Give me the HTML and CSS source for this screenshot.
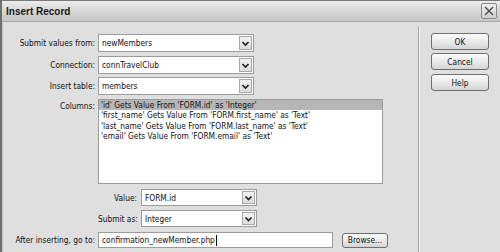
FILE: index.html
```html
<!DOCTYPE html>
<html>
<head>
<meta charset="utf-8">
<link rel="stylesheet" href="styles.css">
</head>
<body>
<div class="window">
  <div class="titlebar">
    <span class="title">Insert Record</span>
    <span class="close"><svg width="14" height="14" viewBox="0 0 14 14"><path d="M3 3 L11 11 M11 3 L3 11" stroke="#4a4a4a" stroke-width="1.4" fill="none"/></svg></span>
  </div>
  <div class="body">
    <div class="form">
      <div class="row r1">
        <label>Submit values from:</label>
        <div class="select wide"><span class="val">newMembers</span><span class="arrow"><svg width="11" height="13" viewBox="0 0 11 13"><path d="M2.5 5 L5.5 8 L8.5 5" stroke="#222" stroke-width="1.7" fill="none"/></svg></span></div>
      </div>
      <div class="row r2">
        <label>Connection:</label>
        <div class="select wide"><span class="val">connTravelClub</span><span class="arrow"><svg width="11" height="13" viewBox="0 0 11 13"><path d="M2.5 5 L5.5 8 L8.5 5" stroke="#222" stroke-width="1.7" fill="none"/></svg></span></div>
      </div>
      <div class="row r3">
        <label>Insert table:</label>
        <div class="select wide"><span class="val">members</span><span class="arrow"><svg width="11" height="13" viewBox="0 0 11 13"><path d="M2.5 5 L5.5 8 L8.5 5" stroke="#222" stroke-width="1.7" fill="none"/></svg></span></div>
      </div>
      <div class="row r4">
        <label class="top">Columns:</label>
        <div class="listbox">
          <div class="item sel">'id' Gets Value From 'FORM.id' as 'Integer'</div>
          <div class="item">'first_name' Gets Value From 'FORM.first_name' as 'Text'</div>
          <div class="item">'last_name' Gets Value From 'FORM.last_name' as 'Text'</div>
          <div class="item">'email' Gets Value From 'FORM.email' as 'Text'</div>
        </div>
      </div>
      <div class="row sub r5">
        <label>Value:</label>
        <div class="select small"><span class="val">FORM.id</span><span class="arrow"><svg width="11" height="12" viewBox="0 0 11 12"><path d="M2.5 4.5 L5.5 7.5 L8.5 4.5" stroke="#222" stroke-width="1.7" fill="none"/></svg></span></div>
      </div>
      <div class="row sub r6">
        <label>Submit as:</label>
        <div class="select small"><span class="val">Integer</span><span class="arrow"><svg width="11" height="12" viewBox="0 0 11 12"><path d="M2.5 4.5 L5.5 7.5 L8.5 4.5" stroke="#222" stroke-width="1.7" fill="none"/></svg></span></div>
      </div>
      <div class="row r7">
        <label>After inserting, go to:</label>
        <div class="input"><span class="val">confirmation_newMember.php</span><span class="caret"></span></div>
        <span class="btn browse">Browse...</span>
      </div>
    </div>
    <div class="sep"></div>
    <div class="buttons">
      <span class="btn">OK</span>
      <span class="btn">Cancel</span>
      <span class="btn help">Help</span>
    </div>
  </div>
</div>
</body>
</html>
```
FILE: styles.css
```css
html, body {
  margin: 0;
  padding: 0;
}
body {
  width: 500px;
  height: 252px;
  overflow: hidden;
  background: #dedede;
  font-family: "DejaVu Sans Condensed", "DejaVu Sans", "Liberation Sans", sans-serif;
  font-size: 8.3px;
  color: #111;
}
.window {
  height: 252px;
  border-left: 2px solid #6f6f6f;
  box-sizing: border-box;
  background: #dfdfdf;
}
.titlebar {
  height: 22px;
  box-sizing: border-box;
  border-top: 1px solid #7a7a7a;
  border-bottom: 1px solid #a9a9a9;
  background: linear-gradient(#ededed, #d6d6d6 50%, #c6c6c6);
  display: flex;
  align-items: center;
  justify-content: space-between;
  padding: 0 3px 0 4px;
}
.title {
  font-family: "Liberation Sans", Arial, sans-serif;
  font-weight: bold;
  font-size: 10px;
  color: #1a1a1a;
}
.close {
  width: 16px;
  height: 16px;
  box-sizing: border-box;
  border: 1px solid #8a8a8a;
  border-radius: 2px;
  background: linear-gradient(#f0f0f0, #cfcfcf);
  display: flex;
  align-items: center;
  justify-content: center;
}
.body {
  display: flex;
  height: 230px;
  box-shadow: inset 1px 0 #c2c2c2;
}
.form {
  width: 416px;
  box-sizing: border-box;
  padding: 12px 0 0 6px;
  display: flex;
  flex-direction: column;
}
.row {
  display: flex;
  align-items: center;
  gap: 3px;
}
.row > label {
  width: 87px;
  text-align: right;
  white-space: nowrap;
}
.row > label.top {
  align-self: flex-start;
  padding-top: 2px;
}
.r2 { margin-top: 4px; }
.r3 { margin-top: 3px; }
.r4 { margin-top: 4px; align-items: flex-start; }
.r5 { margin-top: 5px; }
.r6 { margin-top: 4px; }
.r7 { margin-top: 5px; }
.row.sub {
  padding-left: 90px;
  gap: 4px;
}
.row.sub > label {
  width: 39px;
}
.select {
  height: 18px;
  box-sizing: border-box;
  border: 1px solid #9c9c9c;
  background: #fff;
  display: flex;
  align-items: center;
  justify-content: space-between;
  padding: 1px 1px 1px 3px;
}
.select.wide { width: 156px; }
.select.small { width: 116px; height: 17px; }
.arrow {
  width: 13px;
  height: 100%;
  box-sizing: border-box;
  border: 1px solid #a8a8a8;
  background: linear-gradient(#f2f2f2, #dcdcdc);
  display: flex;
  align-items: center;
  justify-content: center;
}
.listbox {
  width: 285px;
  height: 85px;
  box-sizing: border-box;
  border: 1px solid #9c9c9c;
  background: #fff;
  padding-top: 0;
}
.item {
  height: 10.3px;
  line-height: 10.3px;
  padding-left: 2px;
  white-space: nowrap;
}
.item.sel {
  background: #b6b6b6;
}
.input {
  width: 235px;
  height: 16px;
  box-sizing: border-box;
  border: 1px solid #9c9c9c;
  background: #fff;
  display: flex;
  align-items: center;
  padding-left: 3px;
}
.caret {
  width: 1px;
  height: 11px;
  background: #000;
  margin-left: 1px;
}
.btn {
  display: flex;
  align-items: center;
  justify-content: center;
  box-sizing: border-box;
  border: 1px solid #6f6f6f;
  border-radius: 3px;
  background: linear-gradient(#fbfbfb, #e6e6e6 60%, #d4d4d4);
  color: #111;
}
.browse {
  width: 46px;
  height: 15px;
  margin-left: 6px;
}
.sep {
  width: 1px;
  margin-top: 5px;
  background: #a3a3a3;
  border-right: 1px solid #f4f4f4;
}
.buttons {
  display: flex;
  flex-direction: column;
  gap: 3px;
  padding: 11px 0 0 11px;
}
.buttons .btn {
  width: 58px;
  height: 17px;
}
.buttons .help { margin-top: 1px; }
```
